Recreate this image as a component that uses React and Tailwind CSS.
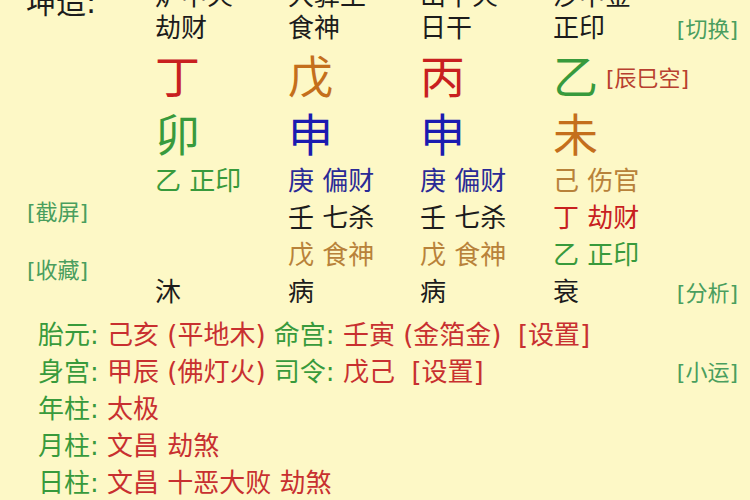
const font = "font-['DejaVu_Sans','Noto_Sans_CJK_SC',sans-serif]";
const cols = "grid grid-cols-[155px_133px_132px_133px_120px_1fr] items-center";

const C = {
  black: "text-[#1c1c1c]",
  red: "text-[#c8201f]",
  orange: "text-[#c46f1c]",
  blue: "text-[#1b1bb0]",
  green: "text-[#389a3c]",
  navy: "text-[#2a2a96]",
  brown: "text-[#b8823a]",
  link: "text-[#4a9e5e]",
};

const nayin = ["炉中火", "大驿土", "山下火", "沙中金"];
const shishen = ["劫财", "食神", "日干", "正印"];
const stems = [
  ["丁", C.red],
  ["戊", C.orange],
  ["丙", C.red],
  ["乙", C.green],
];
const branches = [
  ["卯", C.green],
  ["申", C.blue],
  ["申", C.blue],
  ["未", C.orange],
];

const hidden = [
  [["乙 正印", C.green], ["庚 偏财", C.navy], ["庚 偏财", C.navy], ["己 伤官", C.brown]],
  [null, ["壬 七杀", C.black], ["壬 七杀", C.black], ["丁 劫财", C.red]],
  [null, ["戊 食神", C.brown], ["戊 食神", C.brown], ["乙 正印", C.green]],
];
const changsheng = ["沐", "病", "病", "衰"];

function Link({ children }) {
  return <span className={`text-[22px] leading-[30px] ${C.link}`}>{children}</span>;
}

function Line({ parts, right }) {
  return (
    <div className="flex h-[37px] items-center justify-between pl-[38px] pr-[12px]">
      <div className="whitespace-pre text-[26px] leading-[37px]">
        {parts.map(([t, green], i) => (
          <span key={i} className={green ? C.green : "text-[#c83030]"}>
            {t}
          </span>
        ))}
      </div>
      {right && <Link>{right}</Link>}
    </div>
  );
}

export default function App() {
  return (
    <div className={`h-[500px] w-[750px] overflow-hidden bg-[#fdf8c6] ${font}`}>
      {/* 四柱纳音 (cut off at top) */}
      <div className={`${cols} -mt-[28px] h-[37px] text-[26px] ${C.black}`}>
        <span className="-mb-[12px] self-end pl-[26px] text-[30px] leading-[36px]">坤造:</span>
        {nayin.map((n, i) => (
          <span key={i} className="self-end leading-[26px]">
            {n}
          </span>
        ))}
        <span />
      </div>

      {/* 十神 */}
      <div className={`${cols} h-[38px] text-[26px] ${C.black}`}>
        <span />
        {shishen.map((s, i) => (
          <span key={i}>{s}</span>
        ))}
        <span className="justify-self-end pr-[12px]">
          <Link>[切换]</Link>
        </span>
      </div>

      {/* 天干 */}
      <div className={`${cols} h-[62px]`}>
        <span />
        {stems.map(([s, c], i) => (
          <div key={i} className="flex items-center gap-[8px] whitespace-nowrap">
            <span className={`text-[45px] leading-none ${c}`}>{s}</span>
            {i === 3 && <span className="text-[22px] text-[#b8402f]">[辰巳空]</span>}
          </div>
        ))}
        <span />
      </div>

      {/* 地支 */}
      <div className={`${cols} h-[54px]`}>
        <span />
        {branches.map(([s, c], i) => (
          <span key={i} className={`text-[45px] leading-none ${c}`}>
            {s}
          </span>
        ))}
        <span />
      </div>

      {/* 藏干 + 长生 */}
      <div className={`${cols} grid-rows-[repeat(4,37px)] text-[26px]`}>
        <div className="row-span-4 flex flex-col gap-[28px] self-start pl-[27px] pt-[35px]">
          <Link>[截屏]</Link>
          <Link>[收藏]</Link>
        </div>
        {hidden.map((row, r) =>
          [...row, null].map((cell, i) => (
            <span key={`${r}-${i}`} className={cell ? cell[1] : ""}>
              {cell ? cell[0] : ""}
            </span>
          ))
        )}
        {changsheng.map((s, i) => (
          <span key={`cs-${i}`} className={C.black}>
            {s}
          </span>
        ))}
        <span className="justify-self-end pr-[12px]">
          <Link>[分析]</Link>
        </span>
      </div>

      {/* 胎元 命宫 等 */}
      <div className="mt-[6px]">
        <Line
          parts={[
            ["胎元:", true],
            [" 己亥 (平地木) "],
            ["命宫:", true],
            [" 壬寅 (金箔金)  [设置]"],
          ]}
        />
        <Line
          parts={[
            ["身宫:", true],
            [" 甲辰 (佛灯火) "],
            ["司令:", true],
            [" 戊己  [设置]"],
          ]}
          right="[小运]"
        />
        <Line parts={[["年柱:", true], [" 太极"]]} />
        <Line parts={[["月柱:", true], [" 文昌 劫煞"]]} />
        <Line parts={[["日柱:", true], [" 文昌 十恶大败 劫煞"]]} />
      </div>
    </div>
  );
}
